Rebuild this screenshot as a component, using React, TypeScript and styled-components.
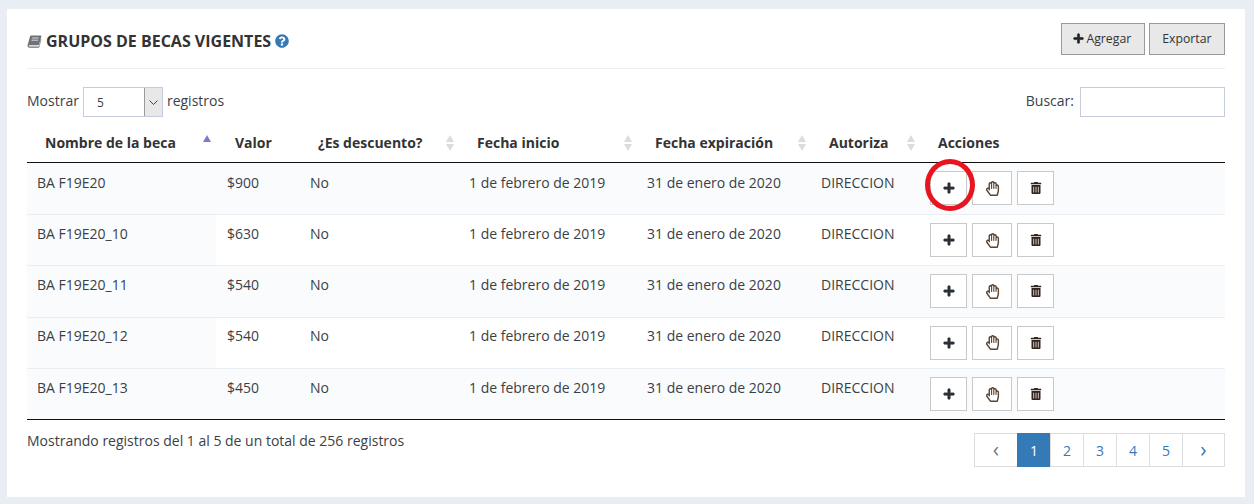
import { createGlobalStyle } from "styled-components";
import styled from "styled-components";
import {
  FaPlus,
  FaQuestionCircle,
  FaRegHandPaper,
  FaTrashAlt,
} from "react-icons/fa";

const GlobalStyle = createGlobalStyle`
  html, body {
    margin: 0;
    padding: 0;
    background: #e9edf4;
    font-family: "Open Sans", "Liberation Sans", sans-serif;
    font-size: 14px;
    color: #3b3f45;
  }
`;

interface Beca {
  name: string;
  value: string;
}

const becas: Beca[] = [
  { name: "BA F19E20", value: "$900" },
  { name: "BA F19E20_10", value: "$630" },
  { name: "BA F19E20_11", value: "$540" },
  { name: "BA F19E20_12", value: "$540" },
  { name: "BA F19E20_13", value: "$450" },
];

const columns = [
  { label: "Nombre de la beca", width: 189, active: true, sort: true },
  { label: "Valor", width: 84 },
  { label: "¿Es descuento?", width: 159, sort: true },
  { label: "Fecha inicio", width: 178, sort: true },
  { label: "Fecha expiración", width: 174, sort: true },
  { label: "Autoriza", width: 109, sort: true },
  { label: "Acciones", width: 305 },
];

const BookIcon = () => (
  <svg width="15" height="13" viewBox="0 0 14 13">
    <path
      d="M3.4 0.5h9.8c.5 0 .8.4.6.9l-2.2 8c-.1.5-.5.8-1 .8H1.9c-.5 0-.7.3-.7.6 0 .4.3.7.8.7h9.4l2-7.400 .5.400-2.100 7.700c-.1.300-.3.500-.6.500H1.900C.8 12.500 0 11.700 0 10.700c0-.2 0-.4.100-.6L2.500 1.500C2.600 .9 2.900.5 3.400.5z"
      fill="#6f7276"
    />
    <path d="M4.600 3h6.600M4 5.200h6.600" stroke="#d9dadb" strokeWidth="1" />
  </svg>
);

export default function App() {
  return (
    <>
      <GlobalStyle />
      <Page>
        <Panel>
          <Header>
            <Title>
              <BookIcon />
              <span>GRUPOS DE BECAS VIGENTES</span>
              <FaQuestionCircle color="#337ab7" size={14} />
            </Title>
            <HeaderButtons>
              <ToolButton>
                <ToolPlus size={11} color="#222" />
                Agregar
              </ToolButton>
              <ToolButton>Exportar</ToolButton>
            </HeaderButtons>
          </Header>
          <Filters>
            <FilterLabel>
              Mostrar
              <LengthSelect>
                <LengthValue>5</LengthValue>
                <SelectArrow>
                  <svg width="9" height="5" viewBox="0 0 9 5">
                    <path d="M.5.500l4 4 4-4" fill="none" stroke="#444" />
                  </svg>
                </SelectArrow>
              </LengthSelect>
              registros
            </FilterLabel>
            <SearchLabel>
              Buscar:
              <SearchInput />
            </SearchLabel>
          </Filters>
          <Table>
            <colgroup>
              {columns.map((c) => (
                <col key={c.label} width={c.width} />
              ))}
            </colgroup>
            <thead>
              <tr>
                {columns.map((c) => (
                  <Th key={c.label}>
                    {c.label}
                    {c.sort && (
                      <SortIcon>
                        <SortUp $active={c.active} />
                        {!c.active && <SortDown />}
                      </SortIcon>
                    )}
                  </Th>
                ))}
              </tr>
            </thead>
            <tbody>
              {becas.map((b, i) => (
                <Row key={b.name} $odd={i % 2 === 0}>
                  <NameCell>{b.name}</NameCell>
                  <Td>{b.value}</Td>
                  <Td>No</Td>
                  <Td>1 de febrero de 2019</Td>
                  <Td>31 de enero de 2020</Td>
                  <Td>DIRECCION</Td>
                  <ActionCell>
                    <Actions>
                      {i === 0 && <Circled />}
                      <ActionButton $w={37}>
                        <BoldPlus size={12} color="#2b3036" />
                      </ActionButton>
                      <ActionButton $w={40}>
                        <FaRegHandPaper size={15} color="#5a4535" />
                      </ActionButton>
                      <ActionButton $w={37}>
                        <FaTrashAlt size={12} color="#33231d" />
                      </ActionButton>
                    </Actions>
                  </ActionCell>
                </Row>
              ))}
            </tbody>
          </Table>
          <Footer>
            <Info>Mostrando registros del 1 al 5 de un total de 256 registros</Info>
            <Pagination>
              <ArrowLink $w={44} $muted>
                ‹
              </ArrowLink>
              <PageLink $w={34} $current>
                1
              </PageLink>
              <PageLink $w={34}>2</PageLink>
              <PageLink $w={34}>3</PageLink>
              <PageLink $w={34}>4</PageLink>
              <PageLink $w={34}>5</PageLink>
              <ArrowLink $w={43}>›</ArrowLink>
            </Pagination>
          </Footer>
        </Panel>
      </Page>
    </>
  );
}

const Page = styled.div`
  padding: 9px 9px 7px 7px;
  width: 1254px;
  height: 504px;
  box-sizing: border-box;
`;

const Panel = styled.div`
  background: #fff;
  height: 488px;
  box-sizing: border-box;
  padding: 14px 20px 0;
`;

const Header = styled.div`
  display: flex;
  justify-content: space-between;
  align-items: flex-start;
  height: 45px;
  border-bottom: 1px solid #e9edf4;
`;

const Title = styled.h2`
  display: flex;
  align-items: center;
  gap: 4px;
  margin: 0;
  height: 36px;
  font-size: 16px;
  font-weight: 700;
  color: #333;
`;

const HeaderButtons = styled.div`
  display: flex;
  gap: 4px;
`;

const ToolButton = styled.button`
  display: flex;
  align-items: center;
  gap: 2px;
  height: 32px;
  padding: 0 12.500px 1px;
  background: #e8e8e8;
  border: 1px solid #999;
  font-family: inherit;
  font-size: 12.250px;
  color: #333;
`;

const BoldPlus = styled(FaPlus)`
  stroke: currentColor;
  stroke-width: 30px;
`;

const ToolPlus = styled(BoldPlus)`
  margin-left: -1px;
`;

const Filters = styled.div`
  display: flex;
  justify-content: space-between;
  align-items: flex-start;
  margin-top: 18px;
  height: 30px;
`;

const FilterLabel = styled.label`
  display: flex;
  align-items: flex-start;
  gap: 4px;
  line-height: 28px;
`;

const SearchLabel = styled(FilterLabel)`
  gap: 6px;
`;

const LengthSelect = styled.div`
  display: flex;
  width: 80px;
  height: 30px;
  box-sizing: border-box;
  border: 1px solid #c5ccdb;
`;

const LengthValue = styled.span`
  flex: 1;
  padding: 1px 0 0 13px;
  line-height: 27px;
  font-size: 12px;
`;

const SelectArrow = styled.span`
  display: flex;
  align-items: center;
  justify-content: center;
  width: 17px;
  background: #e8e8e8;
  border-left: 1px solid #9a9a9a;
`;

const SearchInput = styled.input`
  width: 145px;
  height: 30px;
  box-sizing: border-box;
  border: 1px solid #c5ccdb;
  outline: none;
`;

const Table = styled.table`
  width: 1198px;
  margin-top: 8px;
  table-layout: fixed;
  border-collapse: collapse;
  border-bottom: 1px solid #111;
`;

const Th = styled.th`
  position: relative;
  height: 37px;
  padding: 0 18px 2px;
  box-sizing: border-box;
  text-align: left;
  font-weight: 700;
  color: #333;
  border-bottom: 1px solid #111;
  white-space: nowrap;

  &:nth-child(2) {
    padding-left: 19px;
  }
`;

const SortIcon = styled.span`
  position: absolute;
  right: 5px;
  top: 10px;
  display: flex;
  flex-direction: column;
  gap: 2px;
`;

const SortUp = styled.i<{ $active?: boolean }>`
  width: 0;
  height: 0;
  border-left: 4.500px solid transparent;
  border-right: 4.500px solid transparent;
  border-bottom: 7px solid ${(p) => (p.$active ? "#7b7bd6" : "#dcdcdc")};
`;

const SortDown = styled.i`
  width: 0;
  height: 0;
  border-left: 4.500px solid transparent;
  border-right: 4.500px solid transparent;
  border-top: 7px solid #dcdcdc;
`;

const Td = styled.td`
  padding: 0 10px 13px;
  vertical-align: middle;
  white-space: nowrap;

  &:nth-child(2) {
    padding-left: 11px;
  }
`;

const Row = styled.tr<{ $odd: boolean }>`
  height: 51.400px;
  background: ${(p) => (p.$odd ? "#f9fbfd" : "#fff")};
  border-bottom: 1px solid #e9edf4;

  &:first-child {
    height: 52.400px;
  }

  &:first-child ${Td} {
    padding-bottom: 12px;
  }

  &:nth-child(n + 4) ${Td} {
    padding-bottom: 14px;
  }

  &:last-child {
    border-bottom: none;
  }
`;

const NameCell = styled(Td)`
  background: #f9fbfd;
`;

const ActionCell = styled.td`
  padding: 0 10px;
`;

const Actions = styled.div`
  position: relative;
  display: flex;
  gap: 5px;
`;

const ActionButton = styled.button<{ $w: number }>`
  display: flex;
  align-items: center;
  justify-content: center;
  width: ${(p) => p.$w}px;
  height: 34px;
  padding: 0;
  background: #fff;
  border: 1px solid #c9c9c9;
`;

const Circled = styled.span`
  position: absolute;
  z-index: 1;
  left: -5px;
  top: -12px;
  width: 50px;
  height: 52px;
  box-sizing: border-box;
  border: 5px solid #e8141f;
  border-radius: 50%;
`;

const Footer = styled.div`
  display: flex;
  justify-content: space-between;
  align-items: flex-start;
  margin-top: 13px;
`;

const Info = styled.div`
  line-height: 16px;
`;

const Pagination = styled.div`
  display: flex;
`;

const PageLink = styled.a<{ $w: number; $current?: boolean; $muted?: boolean }>`
  display: flex;
  align-items: center;
  justify-content: center;
  width: ${(p) => p.$w}px;
  height: 34px;
  box-sizing: border-box;
  margin-left: -1px;
  background: ${(p) => (p.$current ? "#337ab7" : "#fff")};
  border: 1px solid ${(p) => (p.$current ? "#337ab7" : "#ddd")};
  color: ${(p) => (p.$current ? "#fff" : p.$muted ? "#777" : "#337ab7")};
`;

const ArrowLink = styled(PageLink)`
  padding-bottom: 3px;
  font-size: 21px;
`;
